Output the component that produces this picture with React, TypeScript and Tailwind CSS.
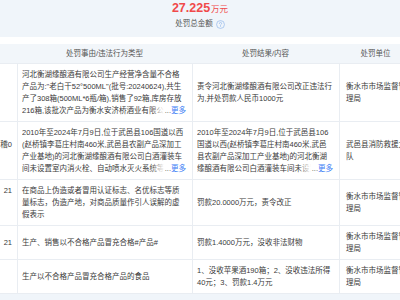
import React from "react";

const QIcon = () => (
  <svg width="9" height="9" viewBox="0 0 16 16" className="inline-block">
    <circle cx="8" cy="8" r="7" fill="none" stroke="#8fb6ea" strokeWidth="1.2" />
    <path d="M6 6.2a2 2 0 1 1 2.8 1.8c-.5.3-.8.6-.8 1.2v.6" fill="none" stroke="#8fb6ea" strokeWidth="1.2" strokeLinecap="round" />
    <circle cx="8" cy="11.6" r="0.8" fill="#8fb6ea" />
  </svg>
);

const Clamp = ({ text }: { text: string }) => (
  <div className="relative">
    <div className="line-clamp-4">{text}</div>
    <span className="absolute right-0 bottom-0 pl-[14px] bg-[linear-gradient(to_right,rgba(255,255,255,0),#fff_13px)] text-[#555]">
      ...<span className="text-[#3d7ef5]">更多</span>
    </span>
  </div>
);

const cell = "border-l border-[#e9edf2] pl-[4px] pr-[6px] py-[4.5px] flex items-center";

type Row = { c1: React.ReactNode; c2: React.ReactNode; c3: React.ReactNode; c4: string };

const rows: Row[] = [
  {
    c1: null,
    c2: (
      <Clamp text={'河北衡湖缘酿酒有限公司生产经营净含量不合格产品为:"老白干52°500ML"(批号:20240624),共生产了308箱(500ML*6瓶/箱),销售了92箱,库房存放216箱,该批次产品为衡水安济桥酒业有限公司生产的产品,已全部召回'} />
    ),
    c3: "责令河北衡湖缘酿酒有限公司改正违法行为,并处罚款人民币1000元",
    c4: "衡水市市场监督管理局",
  },
  {
    c1: (
      <div className="flex flex-col">
        <span>&nbsp;</span>
        <span>武消行罚决字〔2024〕稽0</span>
        <span>&nbsp;</span>
        <span>&nbsp;</span>
      </div>
    ),
    c2: (
      <Clamp text="2010年至2024年7月9日,位于武邑县106国道以西(赵桥镇李葛庄村南460米,武邑县农副产品深加工产业基地)的河北衡湖缘酿酒有限公司白酒灌装车间未设置室内消火栓、自动喷水灭火系统等消防设施" />
    ),
    c3: (
      <Clamp text="2010年至2024年7月9日,位于武邑县106国道以西(赵桥镇李葛庄村南460米,武邑县农副产品深加工产业基地)的河北衡湖缘酿酒有限公司白酒灌装车间未设置室内消火栓、自动喷水灭火系统等消防设施" />
    ),
    c4: "武邑县消防救援大队",
  },
  {
    c1: (
      <div className="flex flex-col">
        <span>衡市监罚〔2024〕21</span>
        <span>&nbsp;</span>
        <span>&nbsp;</span>
      </div>
    ),
    c2: "在商品上伪造或者冒用认证标志、名优标志等质量标志，伪造产地，对商品质量作引人误解的虚假表示",
    c3: "罚款20.0000万元，责令改正",
    c4: "衡水市市场监督管理局",
  },
  {
    c1: "衡市监罚〔2024〕21",
    c2: "生产、销售以不合格产品冒充合格#产品#",
    c3: "罚款1.4000万元，没收非法财物",
    c4: "衡水市市场监督管理局",
  },
  {
    c1: null,
    c2: "生产以不合格产品冒充合格产品的食品",
    c3: "1、没收苹果酒190箱；2、没收违法所得40元；3、罚款1.4万元",
    c4: "衡水市市场监督管理局",
  },
];

export default function App() {
  return (
    <div className="w-[400px] h-[300px] overflow-hidden bg-white font-['Liberation_Sans','Noto_Sans_CJK_SC',sans-serif] text-[7.5px] leading-[12px] text-[#3a3a3a]">
      <div className="h-[37px] bg-[#f0f5fa] flex flex-col items-center pt-[1px]">
        <div className="text-[#f04a4a] font-bold text-[12.5px] leading-[14px]">
          27.225<span className="text-[8.5px] font-normal ml-[1px]">万元</span>
        </div>
        <div className="mt-[2px] flex items-center gap-[3px] text-[#555] leading-[12px]">
          <span>处罚总金额</span>
          <QIcon />
        </div>
      </div>
      <div className="h-[7px]" />
      <div className="ml-[-63px] w-[475px]">
        <div className="grid grid-cols-[80px_175px_147px_73px] h-[20px] bg-[#f2f6fa] text-[#555] border-b border-[#e9edf2]">
          <div />
          <div className="flex items-center justify-center">处罚事由/违法行为类型</div>
          <div className="flex items-center justify-center">处罚结果/内容</div>
          <div className="flex items-center justify-center">处罚单位</div>
        </div>
        {rows.map((r, i) => (
          <div key={i} className="grid grid-cols-[80px_175px_147px_73px] border-b border-[#e9edf2]">
            <div className="pr-[5px] py-[4.5px] flex items-center justify-end whitespace-nowrap overflow-hidden text-right">
              {r.c1}
            </div>
            <div className={cell}>
              <div className="w-full">{r.c2}</div>
            </div>
            <div className={cell}>
              <div className="w-full">{r.c3}</div>
            </div>
            <div className={cell + " pl-[6px]"}>
              <div className="w-[62px]">{r.c4}</div>
            </div>
          </div>
        ))}
        <div className="h-[10px] bg-[#f0f5fa]" />
      </div>
    </div>
  );
}
